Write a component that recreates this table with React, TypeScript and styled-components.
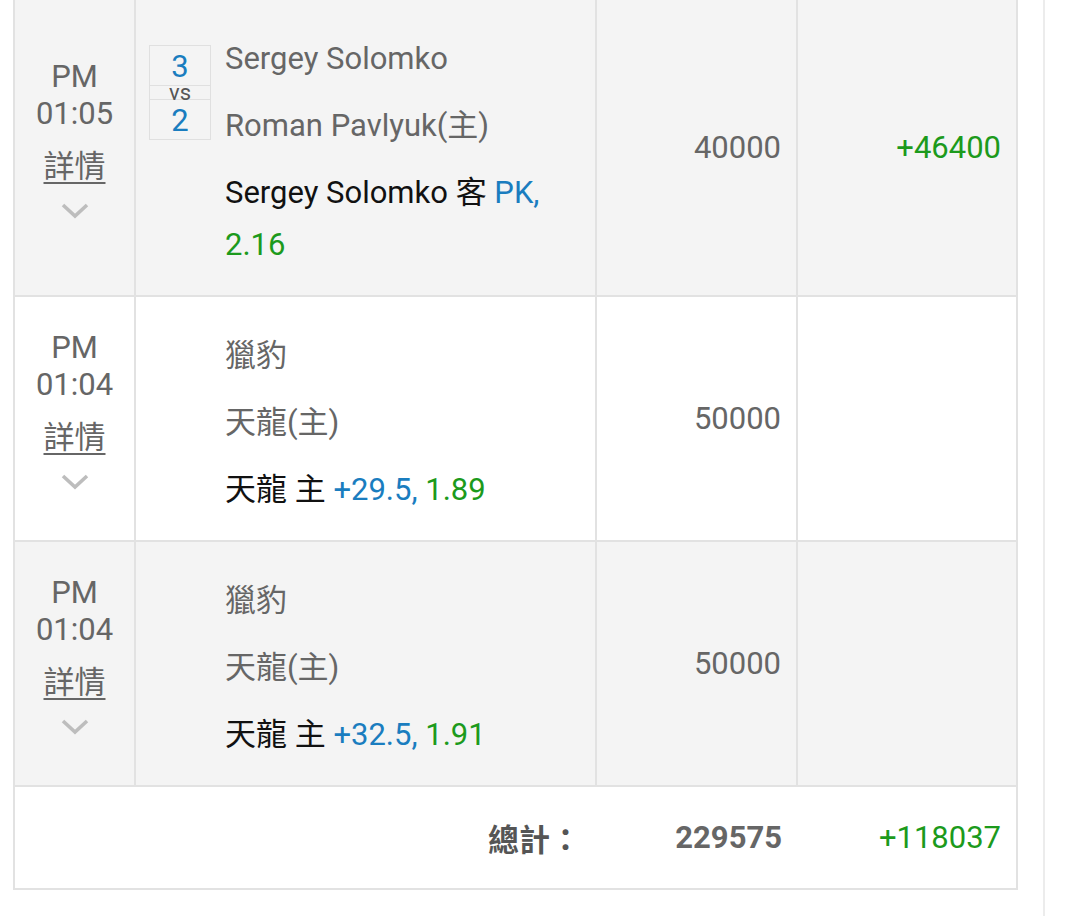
import React from 'react'
import styled, { createGlobalStyle } from 'styled-components'

const GlobalStyle = createGlobalStyle`
  html, body {
    margin: 0;
    padding: 0;
    background: #fff;
  }
  body {
    font-family: Roboto, "Noto Sans CJK TC", "Noto Sans", sans-serif;
  }
`

interface Bet {
  ampm: string
  time: string
  score?: [number, number]
  away: string
  home: string
  pick: string
  line: string
  odds: string
  stake: number
  result?: string
}

const BETS: Bet[] = [
  {
    ampm: 'PM',
    time: '01:05',
    score: [3, 2],
    away: 'Sergey Solomko',
    home: 'Roman Pavlyuk(主)',
    pick: 'Sergey Solomko 客',
    line: 'PK,',
    odds: '2.16',
    stake: 40000,
    result: '+46400',
  },
  {
    ampm: 'PM',
    time: '01:04',
    away: '獵豹',
    home: '天龍(主)',
    pick: '天龍 主',
    line: '+29.5,',
    odds: '1.89',
    stake: 50000,
  },
  {
    ampm: 'PM',
    time: '01:04',
    away: '獵豹',
    home: '天龍(主)',
    pick: '天龍 主',
    line: '+32.5,',
    odds: '1.91',
    stake: 50000,
  },
]

const Chevron = () => (
  <svg width="28" height="16" viewBox="0 0 28 16">
    <polyline points="2,2 14,13 26,2" fill="none" stroke="#bdbdbd" strokeWidth="3.6" />
  </svg>
)

const App: React.FC = () => {
  return (
    <Page>
      <GlobalStyle />
      <Frame>
        <Table>
          <colgroup>
            <col style={{ width: 121 }} />
            <col style={{ width: 461 }} />
            <col style={{ width: 201 }} />
            <col style={{ width: 220 }} />
          </colgroup>
          <tbody>
            {BETS.map((bet, i) => (
              <Row key={i} striped={i % 2 === 0}>
                <TimeCell>
                  <TimeLine>{bet.ampm}</TimeLine>
                  <TimeLine>{bet.time}</TimeLine>
                  <DetailLink href="#">詳情</DetailLink>
                  <ChevronWrap>
                    <Chevron />
                  </ChevronWrap>
                </TimeCell>
                <MatchCell>
                  <MatchInner>
                    <ScoreSlot>
                      {bet.score && (
                        <ScoreBox>
                          <ScoreNum>{bet.score[0]}</ScoreNum>
                          <Vs>vs</Vs>
                          <ScoreNum>{bet.score[1]}</ScoreNum>
                        </ScoreBox>
                      )}
                    </ScoreSlot>
                    <Info>
                      <Team>{bet.away}</Team>
                      <Team>{bet.home}</Team>
                      <Pick>
                        {bet.pick} <Blue>{bet.line}</Blue> <Green>{bet.odds}</Green>
                      </Pick>
                    </Info>
                  </MatchInner>
                </MatchCell>
                <NumCell>{bet.stake}</NumCell>
                <NumCell green>{bet.result}</NumCell>
              </Row>
            ))}
          </tbody>
          <tfoot>
            <Footer>
              <FootLabel colSpan={2}>總計：</FootLabel>
              <FootNum>229575</FootNum>
              <FootNum green>+118037</FootNum>
            </Footer>
          </tfoot>
        </Table>
      </Frame>
    </Page>
  )
}

const Page = styled.div`
  min-height: 100vh;
  overflow: hidden;
`

const Frame = styled.div`
  box-sizing: border-box;
  width: 1045px;
  min-height: 100vh;
  padding-left: 13px;
  margin-top: -2px;
  border-right: 2px solid #ececec;
`

const Table = styled.table`
  width: 1003px;
  table-layout: fixed;
  border-collapse: collapse;
  border: 2px solid #e2e2e2;
  font-size: 31px;
  color: #666;
`

const Row = styled.tr<{ striped: boolean }>`
  background: ${props => (props.striped ? '#f4f4f4' : '#fff')};
  td {
    border: 2px solid #e2e2e2;
  }
`

const TimeCell = styled.td`
  text-align: center;
  vertical-align: middle;
  padding: 0 0 19px;
`

const TimeLine = styled.div`
  line-height: 37px;
`

const DetailLink = styled.a`
  display: inline-block;
  margin-top: 16px;
  line-height: 37px;
  color: #666;
  text-decoration: underline;
  text-underline-offset: 5px;
  text-decoration-thickness: 2px;
`

const ChevronWrap = styled.div`
  margin-top: 18px;
  line-height: 0;
`

const MatchCell = styled.td`
  padding: 18px 15px 24px 13px;
  vertical-align: top;
`

const MatchInner = styled.div`
  display: flex;
`

const ScoreSlot = styled.div`
  flex: 0 0 76px;
  padding-top: 27px;
`

const ScoreBox = styled.div`
  box-sizing: border-box;
  width: 62px;
  border: 1px solid #e0e0e0;
  text-align: center;
`

const ScoreNum = styled.div`
  height: 39px;
  line-height: 42px;
  color: #1a7dbf;
`

const Vs = styled.div`
  height: 13px;
  line-height: 13px;
  font-size: 22px;
  color: #555;
  border-top: 1px solid #e0e0e0;
  border-bottom: 1px solid #e0e0e0;
`

const Info = styled.div`
  flex: 1;
  min-width: 0;
`

const Team = styled.div`
  margin-top: 15px;
  line-height: 52px;
`

const Pick = styled.div`
  margin-top: 15px;
  line-height: 52px;
  color: #111;
`

const Blue = styled.span`
  color: #1a7dbf;
`

const Green = styled.span`
  color: #1c9a1c;
`

const NumCell = styled.td<{ green?: boolean }>`
  text-align: right;
  vertical-align: middle;
  padding: 0 15px 0 0;
  color: ${props => (props.green ? '#1c9a1c' : '#666')};
`

const Footer = styled.tr`
  background: #fff;
  td {
    height: 101px;
    vertical-align: middle;
    text-align: right;
    padding: 0 15px 0 0;
  }
`

const FootLabel = styled.td`
  font-weight: 700;
  color: #555;
`

const FootNum = styled.td<{ green?: boolean }>`
  font-weight: ${props => (props.green ? 400 : 700)};
  color: ${props => (props.green ? '#1c9a1c' : '#666')};
`

export default App
